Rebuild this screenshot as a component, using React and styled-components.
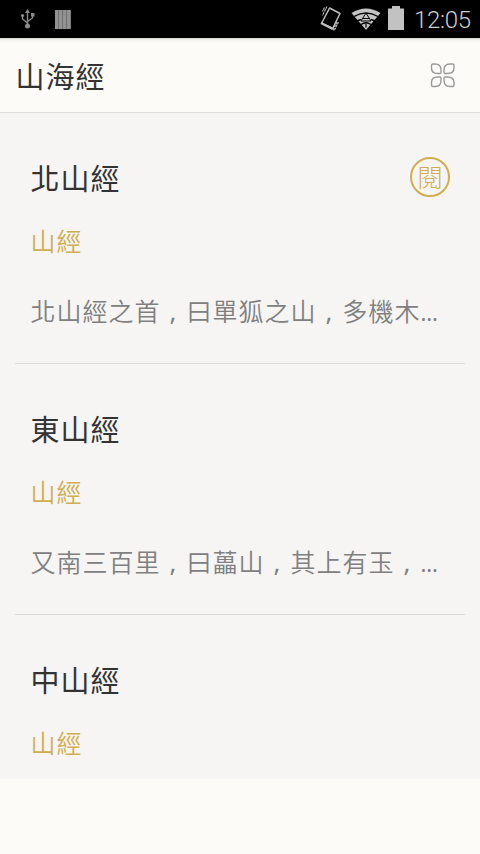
import React from "react";
import styled, { createGlobalStyle } from "styled-components";

const GlobalStyle = createGlobalStyle`
  * { box-sizing: border-box; }
  body {
    margin: 0;
    overflow: hidden;
    background: #fcfbf7;
    font-family: "Noto Sans CJK TC", sans-serif;
  }
`;

const Screen = styled.div`
  height: 854px;
  display: flex;
  flex-direction: column;
  background: #fcfbf7;
`;

const StatusBar = styled.div`
  height: 38px;
  flex: none;
  display: flex;
  align-items: center;
  justify-content: space-between;
  padding: 0 9px 0 20px;
  background: #000;
`;

const StatusGroup = styled.div`
  display: flex;
  align-items: center;
  height: 38px;
`;

const Clock = styled.span`
  width: 57px;
  margin-left: 10px;
  padding-top: 2px;
  font: 24px/36px Roboto, sans-serif;
  font-weight: 300;
  letter-spacing: -0.3px;
  white-space: nowrap;
  color: #cecece;
`;

const Header = styled.header`
  height: 75px;
  flex: none;
  display: flex;
  align-items: center;
  justify-content: space-between;
  padding: 0 25px 0 15.500px;
  border-bottom: 1px solid #dcdcdc;
  background: linear-gradient(#d5d3cf, #f3f1ed 2px, #fcfbf7 5px);
`;

const Title = styled.h1`
  margin: 0;
  font-size: 29px;
  font-weight: 400;
  letter-spacing: 1px;
  line-height: 44px;
  color: #333;
`;

const List = styled.main`
  height: 666px;
  flex: none;
  overflow: hidden;
  padding: 0 15px;
  background: #f6f5f4;
`;

const Entry = styled.article`
  height: 251px;
  padding: 42px 15px 0 15.500px;
  border-bottom: 1px solid #dcdbda;
`;

const EntryHead = styled.div`
  height: 44px;
  display: flex;
  align-items: center;
  justify-content: space-between;
`;

const Badge = styled.span`
  width: 40px;
  height: 40px;
  display: flex;
  align-items: center;
  justify-content: center;
  padding-bottom: 2px;
  border: 2px solid #d0ae50;
  border-radius: 50%;
  font-size: 25px;
  font-weight: 300;
  line-height: 34px;
  color: #d0ae50;
`;

const Category = styled.div`
  margin-top: 21px;
  font-size: 25px;
  font-weight: 350;
  letter-spacing: 1px;
  line-height: 40px;
  color: #d0ae50;
`;

const Excerpt = styled.p`
  margin: 30px 0 0;
  font-size: 25px;
  font-weight: 350;
  letter-spacing: 1px;
  line-height: 40px;
  white-space: nowrap;
  color: #808080;
`;

const Comma = styled.span`
  display: inline-block;
  width: 26px;
  text-align: center;
  font-family: "Noto Sans", sans-serif;
  font-size: 26px;
  font-weight: 400;
  line-height: 1;
`;

const Ellipsis = styled.span`
  font-family: "Noto Sans", sans-serif;
  font-size: 22px;
  font-weight: 400;
  line-height: 1;
`;

const UsbIcon = () => (
  <svg width="16" height="20" viewBox="0 0 16 20" fill="none" stroke="#8a8a8a" strokeWidth="1.4">
    <path d="M7.500 17V3M2.500 7v3l5 4M12.500 6v3l-5 3.500" />
    <path d="M7.500 0 10 4H5z" fill="#8a8a8a" stroke="none" />
    <circle cx="7.500" cy="17" r="2.500" fill="#8a8a8a" stroke="none" />
    <circle cx="2.500" cy="6.500" r="1.600" fill="#8a8a8a" stroke="none" />
    <path d="M11 4h3.500v3.500H11z" fill="#8a8a8a" stroke="none" />
  </svg>
);

const BarsIcon = styled(({ className }) => (
  <svg className={className} width="16" height="19" viewBox="0 0 16 19">
    <path d="M0 0h16v19H0z" fill="#686868" />
    <path d="M0 0h3.200v19H0zM4 0h3.200v19H4zM8 0h3.200v19H8zM12 0h3.500v19H12z" fill="#929292" />
  </svg>
))`
  margin-left: 19px;
`;

const VibrateIcon = () => (
  <svg width="22" height="26" viewBox="0 0 22 26" fill="none" stroke="#bebebe">
    <path d="M9.600 2 20 7.500 12.700 22.500 1.700 17z" strokeWidth="1.500" strokeLinejoin="round" />
    <path d="m1.200 16.200 12 5.600-1 2.200L.5 18z" fill="#bebebe" stroke="none" />
    <path d="M7 .5 2.500 9.500M4.500 1.500 2.500 5.500M18.500 16l-4.500 9M17 16l-4 8" strokeWidth="1.100" strokeDasharray="2.500 .7" />
  </svg>
);

const WifiIcon = styled(({ className }) => (
  <svg className={className} width="30" height="22" viewBox="0 0 30 22">
    <path d="M.5 5Q15-4 29.500 5L15 22z" fill="#c4c4c4" />
    <path d="M3 8.500Q15 1.500 27 8.500M10 16.500Q15 13 20 16.500" fill="none" stroke="#000" strokeWidth="1.400" />
    <path d="M6 13l4-1.500M24 13l-4-1.500" stroke="#000" strokeWidth="1.400" />
    <path d="m15 5-5 8h10z" fill="#c4c4c4" stroke="#000" strokeWidth="1" />
    <path d="M12 10.500h6M15 15.500v4" stroke="#000" strokeWidth="1.200" />
  </svg>
))`
  margin-left: 9px;
`;

const BatteryIcon = styled(({ className }) => (
  <svg className={className} width="16" height="24" viewBox="0 0 16 24">
    <path d="M4 0h8v2.500h4V24H0V2.500h4z" fill="#c2c2c2" />
  </svg>
))`
  margin: -2px 0 0 7px;
`;

const PetalIcon = styled(({ className }) => (
  <svg className={className} width="25" height="25" viewBox="0 0 25 25" fill="none" stroke="#999" strokeWidth="1.400" strokeLinejoin="round">
    <path d="M3 1H5Q11 1 11 7v2.500q0 1-1 1H7.500Q1.500 10.500 1.500 5V2.500Q1.500 1 3 1z" />
    <path d="M22.500 1H20Q14 1 14 7v2.500q0 1 1 1h2.500Q24 10.500 24 5V2.500Q24 1 22.500 1z" />
    <path d="M3 23.500H5Q11 23.500 11 17.500V15q0-1-1-1H7.500Q1.500 14 1.500 19.500V22Q1.500 23.500 3 23.500z" />
    <path d="M22.500 23.500H20Q14 23.500 14 17.500V15q0-1 1-1h2.500Q24 14 24 19.500V22Q24 23.500 22.500 23.500z" />
  </svg>
))`
  margin-top: 1px;
`;

const entries = [
  { title: "北山經", category: "山經", text: "北山經之首,曰單狐之山,多機木", reading: true },
  { title: "東山經", category: "山經", text: "又南三百里,曰藟山,其上有玉," },
  { title: "中山經", category: "山經" },
];

const ExcerptText = ({ text }) => (
  <Excerpt>
    {text.split(",").map((part, i) => (
      <React.Fragment key={i}>
        {i > 0 && <Comma>,</Comma>}
        {part}
      </React.Fragment>
    ))}
    <Ellipsis>…</Ellipsis>
  </Excerpt>
);

export default function App() {
  return (
    <>
      <GlobalStyle />
      <Screen>
        <StatusBar>
          <StatusGroup>
            <UsbIcon />
            <BarsIcon />
          </StatusGroup>
          <StatusGroup>
            <VibrateIcon />
            <WifiIcon />
            <BatteryIcon />
            <Clock>12:05</Clock>
          </StatusGroup>
        </StatusBar>
        <Header>
          <Title>山海經</Title>
          <PetalIcon />
        </Header>
        <List>
          {entries.map((entry) => (
            <Entry key={entry.title}>
              <EntryHead>
                <Title as="h2">{entry.title}</Title>
                {entry.reading && <Badge>閱</Badge>}
              </EntryHead>
              <Category>{entry.category}</Category>
              {entry.text && <ExcerptText text={entry.text} />}
            </Entry>
          ))}
        </List>
      </Screen>
    </>
  );
}
